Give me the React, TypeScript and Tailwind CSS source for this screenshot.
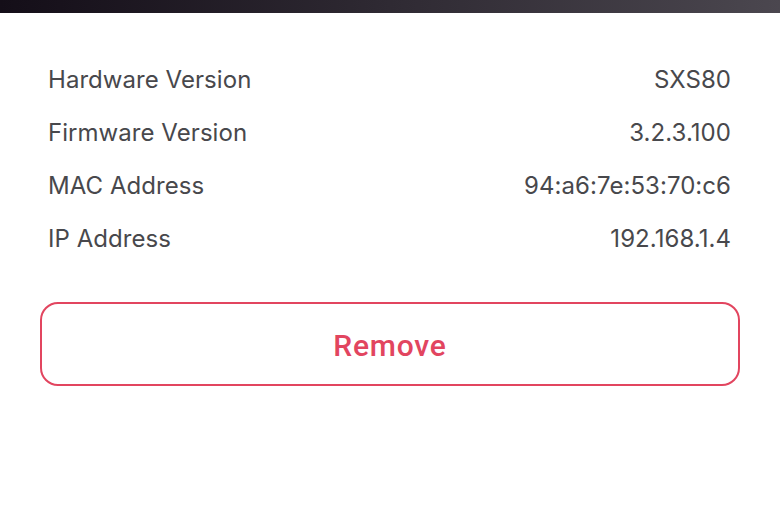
export default function App() {
  const rows = [
    ["Hardware Version", "SXS80"],
    ["Firmware Version", "3.2.3.100"],
    ["MAC Address", "94:a6:7e:53:70:c6"],
    ["IP Address", "192.168.1.4"],
  ];
  return (
    <div className="w-[780px] h-[516px] bg-white flex flex-col" style={{ fontFamily: "Inter, 'Noto Sans', sans-serif" }}>
      <div className="h-[13px] w-full bg-gradient-to-r from-[#140e18] via-[#2f2a33] to-[#4b474f]" />
      <div className="flex flex-col px-[48px] pt-[40px]">
        {rows.map(([k, v]) => (
          <div key={k} className="flex justify-between items-center h-[53px] text-[24px] tracking-[0.05px] text-[#48484c] pr-[1px]">
            <span>{k}</span>
            <span>{v}</span>
          </div>
        ))}
      </div>
      <div className="px-[40px] mt-[37px]">
        <button className="w-full h-[84px] rounded-[18px] border-[2.5px] border-[#e2455f] bg-white flex items-center justify-center pt-[3px] text-[30px] tracking-[0.8px] font-medium text-[#e2455f]" style={{ fontFamily: "Roboto, sans-serif" }}>
          Remove
        </button>
      </div>
    </div>
  );
}
